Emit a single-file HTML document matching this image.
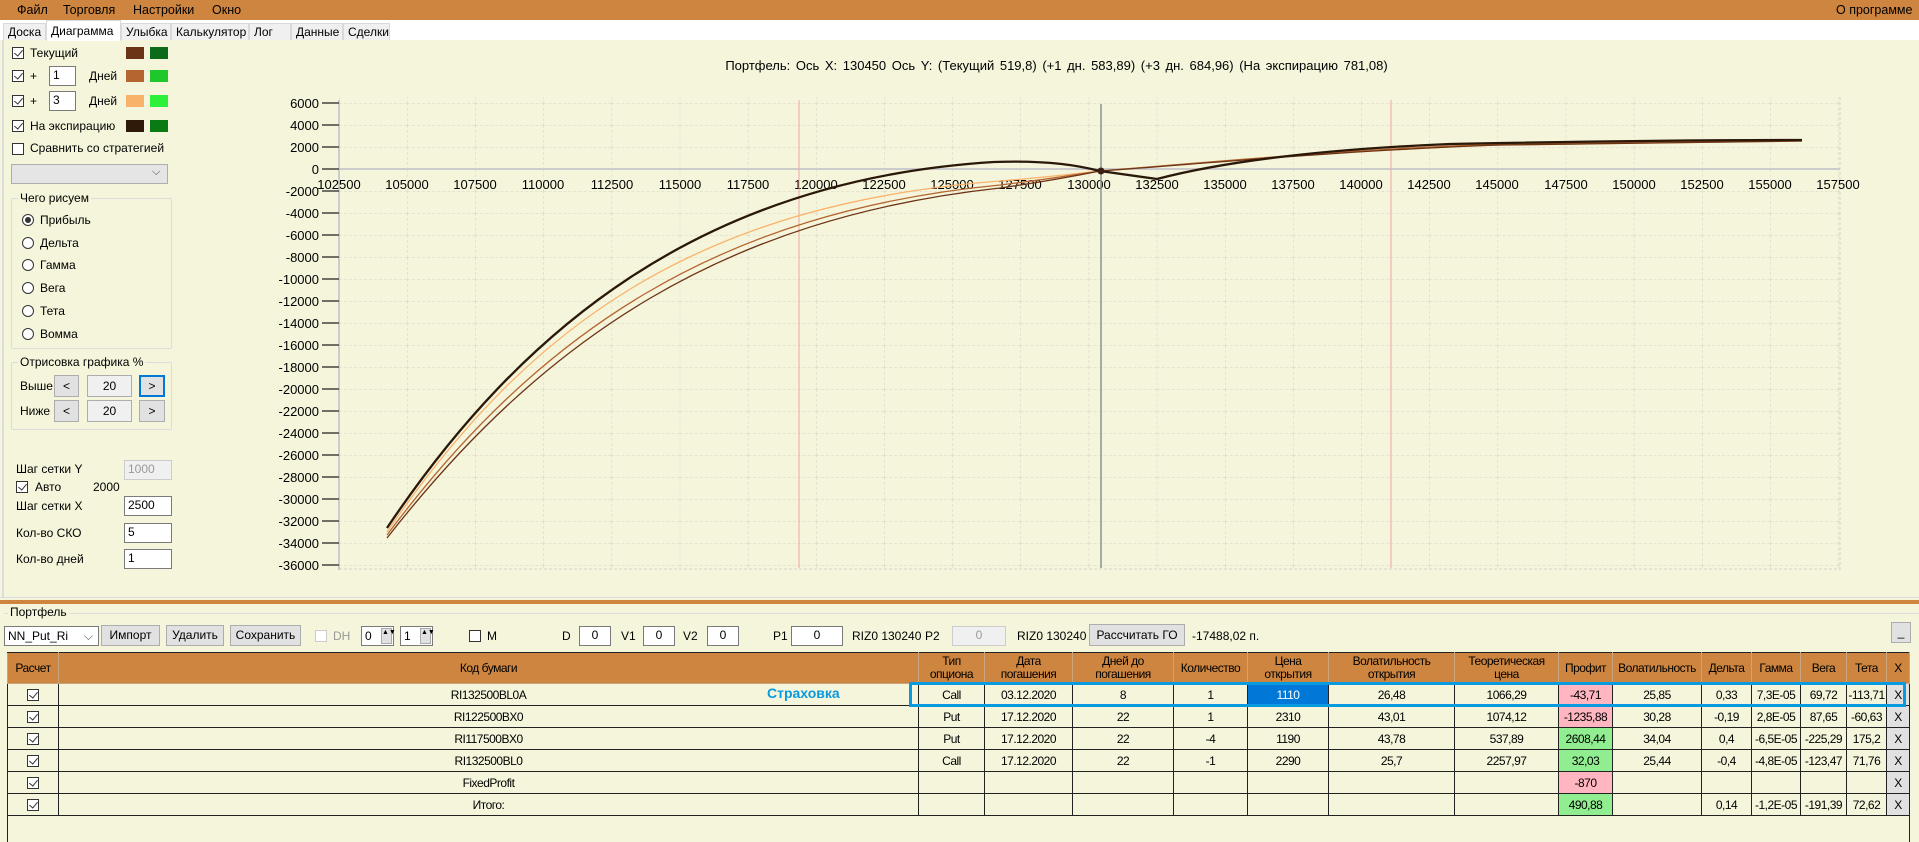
<!DOCTYPE html>
<html><head><meta charset="utf-8">
<style>
*{box-sizing:border-box;margin:0;padding:0}
body{width:1919px;height:839px;overflow:hidden;background:#F5F5DC;font-family:"Liberation Sans",sans-serif;font-size:12px;color:#000;position:relative}
.a{position:absolute;white-space:nowrap}
.menu{left:0;top:0;width:1919px;height:20px;background:#CD853F}
.menu span{position:absolute;top:3px;font-size:12.5px}
.tabs{left:0;top:20px;width:1919px;height:20px;background:#fff}
.tab{position:absolute;top:3px;height:17px;border:1px solid #d9d9d9;border-bottom:none;background:#f0f0f0;font-size:12px;padding:1px 0 0 4px}
.tab.sel{top:0;height:21px;background:#fff;border-color:#d9d9d9}
.cb{position:absolute;width:12px;height:12px;border:1px solid #333;background:#fff}
.cb.c::after{content:"";position:absolute;left:3px;top:0px;width:4px;height:7px;border:solid #333;border-width:0 1.3px 1.3px 0;transform:rotate(40deg)}
.sw{position:absolute;width:18px;height:12px}
.inp{position:absolute;background:#fff;border:1px solid #7a7a7a;padding:1px 3px;font-size:12px}
.btn{position:absolute;background:#e1e1e1;border:1px solid #adadad;text-align:center;font-size:12px}
.rad{position:absolute;width:12px;height:12px;border:1px solid #333;border-radius:50%;background:#fff}
.grp{position:absolute;border:1px solid #dcdcdc;border-radius:2px}
.grp b{position:absolute;top:-8px;left:6px;background:#F5F5DC;font-weight:normal;padding:0 2px}
table{position:absolute;left:7px;top:652px;border-collapse:collapse;table-layout:fixed;font-family:"Liberation Sans",sans-serif;font-size:12px;letter-spacing:-0.5px}
td,th{border:1px solid #222;text-align:center;height:22px;padding:0;overflow:hidden;white-space:nowrap}
th{background:#CD853F;font-weight:normal;height:31px;line-height:13px;border-color:#c9a57f;border-top:1px solid #222}
td.pk{background:#FFB6C1}td.gr{background:#90EE90}td.bl{background:#0078D7;color:#fff}
td.x{background:#e1e1e1;border-color:#222}
td .cb{position:relative;display:inline-block;vertical-align:middle}
</style></head><body>
<div class="a menu"><span style="left:17px">Файл</span><span style="left:63px">Торговля</span><span style="left:133px">Настройки</span><span style="left:212px">Окно</span><span style="left:1836px">О программе</span></div>
<div class="a tabs">
<div class="tab" style="left:3px;width:43px">Доска</div>
<div class="tab sel" style="left:46px;width:75px;padding-top:3px">Диаграмма</div>
<div class="tab" style="left:121px;width:50px">Улыбка</div>
<div class="tab" style="left:171px;width:78px">Калькулятор</div>
<div class="tab" style="left:249px;width:42px">Лог</div>
<div class="tab" style="left:291px;width:52px">Данные</div>
<div class="tab" style="left:343px;width:47px">Сделки</div>
</div>
<div class="a" style="left:2px;top:40px;width:2px;height:558px;background:#dcdcdc"></div>

<div class="cb c" style="left:12px;top:47px"></div><div class="a" style="left:30px;top:46px">Текущий</div>
<div class="sw" style="left:126px;top:47px;background:#6b3417"></div><div class="sw" style="left:150px;top:47px;background:#0b6b1a"></div>
<div class="cb c" style="left:12px;top:70px"></div><div class="a" style="left:30px;top:69px">+</div>
<div class="inp" style="left:49px;top:66px;width:27px;height:20px">1</div><div class="a" style="left:89px;top:69px">Дней</div>
<div class="sw" style="left:126px;top:70px;background:#b5652f"></div><div class="sw" style="left:150px;top:70px;background:#1ec72c"></div>
<div class="cb c" style="left:12px;top:95px"></div><div class="a" style="left:30px;top:94px">+</div>
<div class="inp" style="left:49px;top:91px;width:27px;height:20px">3</div><div class="a" style="left:89px;top:94px">Дней</div>
<div class="sw" style="left:126px;top:95px;background:#f9b26a"></div><div class="sw" style="left:150px;top:95px;background:#2ef03a"></div>
<div class="cb c" style="left:12px;top:120px"></div><div class="a" style="left:30px;top:119px">На экспирацию</div>
<div class="sw" style="left:126px;top:120px;background:#2f1a0a"></div><div class="sw" style="left:150px;top:120px;background:#0a7a14"></div>
<div class="cb" style="left:12px;top:143px"></div><div class="a" style="left:30px;top:141px">Сравнить со стратегией</div>
<div class="a" style="left:11px;top:164px;width:157px;height:20px;background:#e5e5e5;border:1px solid #adadad"></div>
<div class="a" style="left:152px;top:166px;font-size:11px;color:#444">⌵</div>

<div class="grp" style="left:11px;top:198px;width:161px;height:151px"><b>Чего рисуем</b></div>
<div class="rad" style="left:22px;top:214px"><div style="position:absolute;left:2px;top:2px;width:6px;height:6px;border-radius:50%;background:#333"></div></div><div class="a" style="left:40px;top:213px">Прибыль</div>
<div class="rad" style="left:22px;top:237px"></div><div class="a" style="left:40px;top:236px">Дельта</div>
<div class="rad" style="left:22px;top:259px"></div><div class="a" style="left:40px;top:258px">Гамма</div>
<div class="rad" style="left:22px;top:282px"></div><div class="a" style="left:40px;top:281px">Вега</div>
<div class="rad" style="left:22px;top:305px"></div><div class="a" style="left:40px;top:304px">Тета</div>
<div class="rad" style="left:22px;top:328px"></div><div class="a" style="left:40px;top:327px">Вомма</div>

<div class="grp" style="left:11px;top:362px;width:161px;height:68px"><b>Отрисовка графика %</b></div>
<div class="a" style="left:20px;top:379px">Выше</div>
<div class="btn" style="left:54px;top:375px;width:25px;height:22px;line-height:20px">&lt;</div>
<div class="btn" style="left:87px;top:375px;width:45px;height:22px;line-height:20px;background:#f0f0f0">20</div>
<div class="btn" style="left:139px;top:375px;width:26px;height:22px;line-height:18px;border:2px solid #0078d7">&gt;</div>
<div class="a" style="left:20px;top:404px">Ниже</div>
<div class="btn" style="left:54px;top:400px;width:25px;height:22px;line-height:20px">&lt;</div>
<div class="btn" style="left:87px;top:400px;width:45px;height:22px;line-height:20px;background:#f0f0f0">20</div>
<div class="btn" style="left:139px;top:400px;width:26px;height:22px;line-height:20px">&gt;</div>

<div class="a" style="left:16px;top:462px">Шаг сетки Y</div>
<div class="inp" style="left:124px;top:460px;width:48px;height:20px;background:#f0f0f0;border-color:#ccc;color:#999">1000</div>
<div class="cb c" style="left:16px;top:481px"></div><div class="a" style="left:35px;top:480px">Авто</div><div class="a" style="left:93px;top:480px">2000</div>
<div class="a" style="left:16px;top:499px">Шаг сетки X</div>
<div class="inp" style="left:124px;top:496px;width:48px;height:20px">2500</div>
<div class="a" style="left:16px;top:526px">Кол-во СКО</div>
<div class="inp" style="left:124px;top:523px;width:48px;height:20px">5</div>
<div class="a" style="left:16px;top:552px">Кол-во дней</div>
<div class="inp" style="left:124px;top:549px;width:48px;height:20px">1</div>

<div class="a" style="left:0;top:58px;width:2113px;text-align:center;font-size:13px;word-spacing:2px">Портфель: Ось X:  130450 Ось Y:  (Текущий 519,8)  (+1 дн. 583,89)  (+3 дн. 684,96)  (На экспирацию 781,08)</div>
<svg class="a" style="left:0;top:0" width="1919" height="600" xmlns="http://www.w3.org/2000/svg" font-family="Liberation Sans, sans-serif" font-size="13">
<defs><pattern id="g" x="339" y="103" width="68.15" height="22" patternUnits="userSpaceOnUse">
<path d="M0 0V22M0 0H68.15" stroke="#d6d4c4" stroke-width="1" stroke-dasharray="3 2" fill="none"/></pattern></defs>
<rect x="339" y="97" width="1501" height="473" fill="url(#g)"/>
<line x1="1840" y1="97" x2="1840" y2="570" stroke="#d6d4c4" stroke-dasharray="3 2"/>
<line x1="339" y1="569" x2="1840" y2="569" stroke="#d6d4c4" stroke-dasharray="3 2"/>
<line x1="339" y1="169" x2="1840" y2="169" stroke="#ccc" stroke-width="2"/>
<line x1="339" y1="100" x2="339" y2="570" stroke="#ccc" stroke-width="2"/>
<g stroke="#222" stroke-width="1.3">
<line x1="322" y1="103" x2="339" y2="103"/><line x1="322" y1="125" x2="339" y2="125"/><line x1="322" y1="147" x2="339" y2="147"/><line x1="322" y1="169" x2="339" y2="169"/><line x1="322" y1="191" x2="339" y2="191"/><line x1="322" y1="213" x2="339" y2="213"/><line x1="322" y1="235" x2="339" y2="235"/><line x1="322" y1="257" x2="339" y2="257"/><line x1="322" y1="279" x2="339" y2="279"/><line x1="322" y1="301" x2="339" y2="301"/><line x1="322" y1="323" x2="339" y2="323"/><line x1="322" y1="345" x2="339" y2="345"/><line x1="322" y1="367" x2="339" y2="367"/><line x1="322" y1="389" x2="339" y2="389"/><line x1="322" y1="411" x2="339" y2="411"/><line x1="322" y1="433" x2="339" y2="433"/><line x1="322" y1="455" x2="339" y2="455"/><line x1="322" y1="477" x2="339" y2="477"/><line x1="322" y1="499" x2="339" y2="499"/><line x1="322" y1="521" x2="339" y2="521"/><line x1="322" y1="543" x2="339" y2="543"/><line x1="322" y1="565" x2="339" y2="565"/>
</g>
<g text-anchor="end">
<text x="319" y="108">6000</text><text x="319" y="130">4000</text><text x="319" y="152">2000</text><text x="319" y="174">0</text><text x="319" y="196">-2000</text><text x="319" y="218">-4000</text><text x="319" y="240">-6000</text><text x="319" y="262">-8000</text><text x="319" y="284">-10000</text><text x="319" y="306">-12000</text><text x="319" y="328">-14000</text><text x="319" y="350">-16000</text><text x="319" y="372">-18000</text><text x="319" y="394">-20000</text><text x="319" y="416">-22000</text><text x="319" y="438">-24000</text><text x="319" y="460">-26000</text><text x="319" y="482">-28000</text><text x="319" y="504">-30000</text><text x="319" y="526">-32000</text><text x="319" y="548">-34000</text><text x="319" y="570">-36000</text>
</g>
<g text-anchor="middle">
<text x="339" y="189">102500</text><text x="407" y="189">105000</text><text x="475" y="189">107500</text><text x="543" y="189">110000</text><text x="612" y="189">112500</text><text x="680" y="189">115000</text><text x="748" y="189">117500</text><text x="816" y="189">120000</text><text x="884" y="189">122500</text><text x="952" y="189">125000</text><text x="1020" y="189">127500</text><text x="1089" y="189">130000</text><text x="1157" y="189">132500</text><text x="1225" y="189">135000</text><text x="1293" y="189">137500</text><text x="1361" y="189">140000</text><text x="1429" y="189">142500</text><text x="1497" y="189">145000</text><text x="1566" y="189">147500</text><text x="1634" y="189">150000</text><text x="1702" y="189">152500</text><text x="1770" y="189">155000</text><text x="1838" y="189">157500</text>
</g>
<line x1="799" y1="100" x2="799" y2="568" stroke="#f0a8a0"/>
<line x1="1391" y1="100" x2="1391" y2="568" stroke="#f0a8a0"/>
<line x1="1101" y1="104" x2="1101" y2="568" stroke="#8a9590" stroke-width="1.5"/>
<g fill="none">
<path d="M387,532 C530,322 700,204 1000,181 C1050,177 1080,173 1100,171 C1200,163 1350,150 1500,145 L1802,141" stroke="#f9b26a" stroke-width="1.3"/>
<path d="M387,535 C540,330 720,212 1000,185 C1050,179 1080,174 1100,171 C1200,163 1350,149 1500,144 L1802,140" stroke="#b5652f" stroke-width="1.3"/>
<path d="M387,538 C545,336 725,218 1000,188 C1050,181 1080,175 1100,171 C1200,164 1350,150 1500,145 L1802,141" stroke="#6b3417" stroke-width="1.3"/>
<path d="M387,528 C520,330 700,180 994,162 C1050,160 1080,166 1100,171 L1157,179 C1230,160 1330,149 1450,144 C1600,141 1700,140 1802,140" stroke="#2a1808" stroke-width="2.3"/>
</g>
<circle cx="1101" cy="171" r="3.5" fill="#3a2010"/>
</svg>

<div class="a" style="left:0;top:597px;width:1919px;height:1px;background:#dcdcdc"></div>
<div class="a" style="left:0;top:600px;width:1919px;height:4px;background:#CD853F"></div>
<div class="a" style="left:4px;top:613px;width:1915px;height:1px;background:#dcdcdc"></div>
<div class="a" style="left:8px;top:605px;background:#F5F5DC;padding:0 2px">Портфель</div>

<div class="a" style="left:4px;top:626px;width:95px;height:20px;background:#fff;border:1px solid #7a7a7a;padding:2px 3px" >NN_Put_Ri<span style="position:absolute;right:5px;top:2px;color:#555">⌵</span></div>
<div class="btn" style="left:101px;top:625px;width:59px;height:21px;line-height:19px">Импорт</div>
<div class="btn" style="left:166px;top:625px;width:58px;height:21px;line-height:19px">Удалить</div>
<div class="btn" style="left:230px;top:625px;width:71px;height:21px;line-height:19px">Сохранить</div>
<div class="cb" style="left:315px;top:630px;border-color:#ccc"></div><div class="a" style="left:333px;top:629px;color:#999">DH</div>
<div class="inp" style="left:361px;top:626px;width:33px;height:20px;padding-top:2px">0<span style="position:absolute;right:1px;top:1px;width:11px;height:16px;background:#e1e1e1;border:1px solid #aaa;font-size:7px;line-height:7px;text-align:center">▲▼</span></div>
<div class="inp" style="left:400px;top:626px;width:33px;height:20px;padding-top:2px">1<span style="position:absolute;right:1px;top:1px;width:11px;height:16px;background:#e1e1e1;border:1px solid #aaa;font-size:7px;line-height:7px;text-align:center">▲▼</span></div>
<div class="cb" style="left:469px;top:630px"></div><div class="a" style="left:487px;top:629px">M</div>
<div class="a" style="left:562px;top:629px">D</div><div class="inp" style="left:579px;top:626px;width:32px;height:20px;text-align:center">0</div>
<div class="a" style="left:621px;top:629px">V1</div><div class="inp" style="left:643px;top:626px;width:32px;height:20px;text-align:center">0</div>
<div class="a" style="left:683px;top:629px">V2</div><div class="inp" style="left:707px;top:626px;width:32px;height:20px;text-align:center">0</div>
<div class="a" style="left:773px;top:629px">P1</div><div class="inp" style="left:791px;top:626px;width:52px;height:20px;text-align:center">0</div>
<div class="a" style="left:852px;top:629px">RIZ0 130240</div>
<div class="a" style="left:925px;top:629px">P2</div><div class="inp" style="left:952px;top:626px;width:54px;height:20px;text-align:center;background:#f0f0f0;border-color:#ccc;color:#999">0</div>
<div class="a" style="left:1017px;top:629px">RIZ0 130240</div>
<div class="btn" style="left:1089px;top:624px;width:96px;height:22px;line-height:20px">Рассчитать ГО</div>
<div class="a" style="left:1192px;top:629px">-17488,02 п.</div>
<div class="btn" style="left:1891px;top:622px;width:20px;height:21px;line-height:19px">_</div>

<div class="a" style="left:7px;top:652px;width:1903px;height:190px;border:1px solid #222;border-bottom:none"></div>
<table>
<colgroup><col style="width:51px"><col style="width:860px"><col style="width:66px"><col style="width:88px"><col style="width:101px"><col style="width:74px"><col style="width:81px"><col style="width:126px"><col style="width:104px"><col style="width:54px"><col style="width:89px"><col style="width:50px"><col style="width:49px"><col style="width:46px"><col style="width:40px"><col style="width:23px"></colgroup>
<tr><th>Расчет</th><th>Код бумаги</th><th>Тип<br>опциона</th><th>Дата<br>погашения</th><th>Дней до<br>погашения</th><th>Количество</th><th>Цена<br>открытия</th><th>Волатильность<br>открытия</th><th>Теоретическая<br>цена</th><th>Профит</th><th>Волатильность</th><th>Дельта</th><th>Гамма</th><th>Вега</th><th>Тета</th><th>X</th></tr>
<tr><td><span class="cb c"></span></td><td>RI132500BL0A</td><td>Call</td><td>03.12.2020</td><td>8</td><td>1</td><td class="bl">1110</td><td>26,48</td><td>1066,29</td><td class="pk">-43,71</td><td>25,85</td><td>0,33</td><td>7,3E-05</td><td>69,72</td><td>-113,71</td><td class="x">X</td></tr>
<tr><td><span class="cb c"></span></td><td>RI122500BX0</td><td>Put</td><td>17.12.2020</td><td>22</td><td>1</td><td>2310</td><td>43,01</td><td>1074,12</td><td class="pk">-1235,88</td><td>30,28</td><td>-0,19</td><td>2,8E-05</td><td>87,65</td><td>-60,63</td><td class="x">X</td></tr>
<tr><td><span class="cb c"></span></td><td>RI117500BX0</td><td>Put</td><td>17.12.2020</td><td>22</td><td>-4</td><td>1190</td><td>43,78</td><td>537,89</td><td class="gr">2608,44</td><td>34,04</td><td>0,4</td><td>-6,5E-05</td><td>-225,29</td><td>175,2</td><td class="x">X</td></tr>
<tr><td><span class="cb c"></span></td><td>RI132500BL0</td><td>Call</td><td>17.12.2020</td><td>22</td><td>-1</td><td>2290</td><td>25,7</td><td>2257,97</td><td class="gr">32,03</td><td>25,44</td><td>-0,4</td><td>-4,8E-05</td><td>-123,47</td><td>71,76</td><td class="x">X</td></tr>
<tr><td><span class="cb c"></span></td><td>FixedProfit</td><td></td><td></td><td></td><td></td><td></td><td></td><td></td><td class="pk">-870</td><td></td><td></td><td></td><td></td><td></td><td class="x">X</td></tr>
<tr><td><span class="cb c"></span></td><td>Итого:</td><td></td><td></td><td></td><td></td><td></td><td></td><td></td><td class="gr">490,88</td><td></td><td>0,14</td><td>-1,2E-05</td><td>-191,39</td><td>72,62</td><td class="x">X</td></tr>
</table>
<div class="a" style="left:909px;top:682px;width:997px;height:25px;border:3.5px solid #0a9ae0"></div>
<div class="a" style="left:767px;top:685px;color:#0a9ae0;font-weight:bold;font-size:14px">Страховка</div>
</body></html>
